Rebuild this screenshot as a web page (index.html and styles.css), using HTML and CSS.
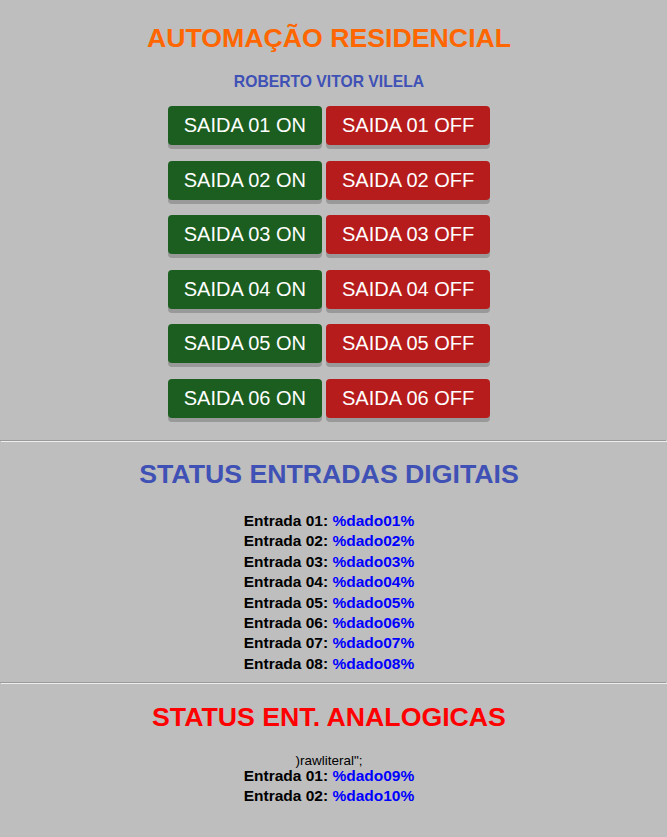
FILE: index.html
```html
<!DOCTYPE html>
<html lang="pt-BR">

<head>
  <meta charset="UTF-8">
  <meta name="viewport" content="width=device-width, initial-scale=1.0">
  <title>Automação Residencial</title>
  <link rel="stylesheet" href="styles.css">
</head>

<body>
  <h1 class="title">AUTOMAÇÃO RESIDENCIAL</h1>
  <h3 class="author">ROBERTO VITOR VILELA</h3>

  <div class="outputs">
    <div class="row">
      <a class="button on" href="#">SAIDA 01 ON</a>
      <a class="button off" href="#">SAIDA 01 OFF</a>
    </div>
    <div class="row">
      <a class="button on" href="#">SAIDA 02 ON</a>
      <a class="button off" href="#">SAIDA 02 OFF</a>
    </div>
    <div class="row">
      <a class="button on" href="#">SAIDA 03 ON</a>
      <a class="button off" href="#">SAIDA 03 OFF</a>
    </div>
    <div class="row">
      <a class="button on" href="#">SAIDA 04 ON</a>
      <a class="button off" href="#">SAIDA 04 OFF</a>
    </div>
    <div class="row">
      <a class="button on" href="#">SAIDA 05 ON</a>
      <a class="button off" href="#">SAIDA 05 OFF</a>
    </div>
    <div class="row">
      <a class="button on" href="#">SAIDA 06 ON</a>
      <a class="button off" href="#">SAIDA 06 OFF</a>
    </div>
  </div>

  <hr>

  <h2 class="section digital">STATUS ENTRADAS DIGITAIS</h2>
  <div class="inputs">
    <p>Entrada 01: <span class="value">%dado01%</span></p>
    <p>Entrada 02: <span class="value">%dado02%</span></p>
    <p>Entrada 03: <span class="value">%dado03%</span></p>
    <p>Entrada 04: <span class="value">%dado04%</span></p>
    <p>Entrada 05: <span class="value">%dado05%</span></p>
    <p>Entrada 06: <span class="value">%dado06%</span></p>
    <p>Entrada 07: <span class="value">%dado07%</span></p>
    <p>Entrada 08: <span class="value">%dado08%</span></p>
  </div>

  <hr>

  <h2 class="section analog">STATUS ENT. ANALOGICAS</h2>
  <div class="raw">)rawliteral";</div>
  <div class="inputs">
    <p>Entrada 01: <span class="value">%dado09%</span></p>
    <p>Entrada 02: <span class="value">%dado10%</span></p>
  </div>
</body>

</html>
```

FILE: styles.css
```css
body {
  margin: 0;
  padding-right: 9px;
  background-color: #bebebe;
  font-family: "Liberation Sans", Arial, sans-serif;
  text-align: center;
}

.title {
  color: #ff6600;
  font-size: 26.7px;
  margin: 23px 0 0;
}

.author {
  color: #3f51b5;
  font-size: 15.7px;
  margin: 19px 0 15px;
}

.outputs {
  display: flex;
  flex-direction: column;
  align-items: center;
  gap: 15.6px;
  padding-bottom: 22px;
}

.row {
  display: flex;
  gap: 4px;
}

.button {
  display: block;
  color: #fff;
  text-decoration: none;
  font-size: 20px;
  line-height: 23px;
  padding: 8px 16px;
  border-radius: 4px;
  box-shadow: 0 4px #999;
}

.on {
  background-color: #1b5e20;
}

.off {
  background-color: #b71c1c;
}

/* rules run edge to edge, past the body padding */
hr {
  margin: 0 -9px 0 0;
}

.section {
  font-size: 26.7px;
  margin: 17px 0 21px;
}

.digital {
  color: #3f51b5;
}

.analog {
  color: #ff0000;
  margin-top: 18px;
}

.inputs {
  padding-bottom: 8px;
}

.inputs p {
  margin: 0;
  font-size: 15.5px;
  font-weight: bold;
  line-height: 20.4px;
}

.value {
  color: #0000ff;
}

.raw {
  font-size: 13.5px;
  line-height: 13px;
  margin: 10.5px 0 -1.5px;
}
```
